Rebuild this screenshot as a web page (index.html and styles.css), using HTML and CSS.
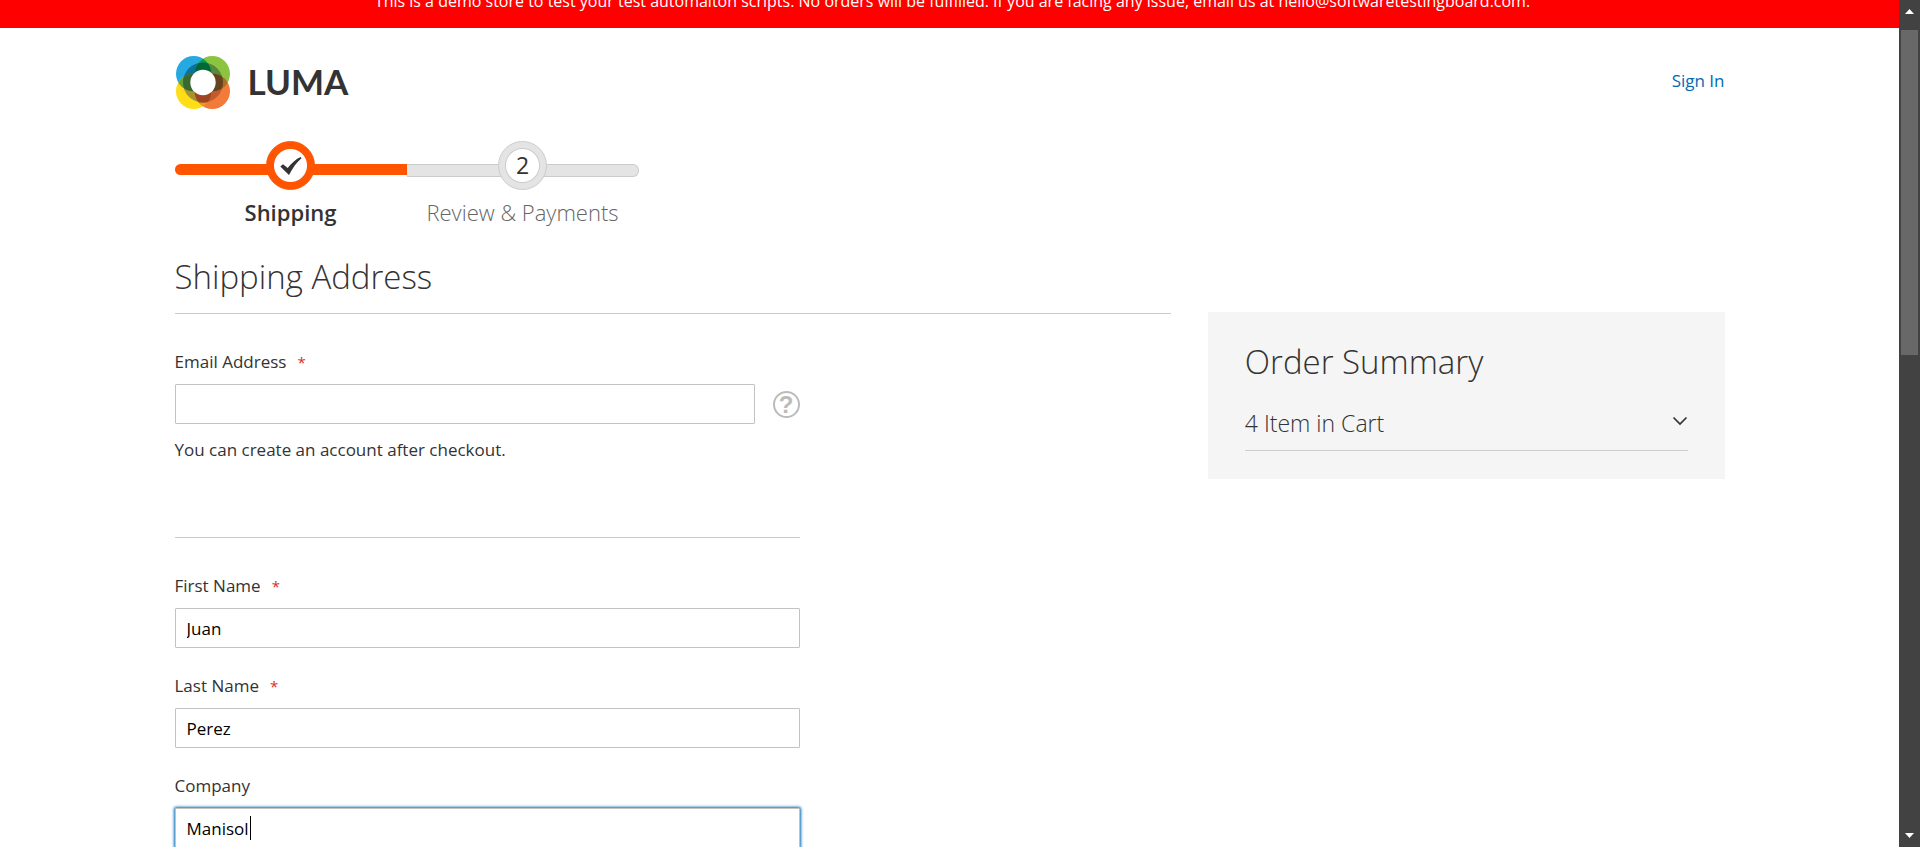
FILE: index.html
```html
<!DOCTYPE html>
<html lang="en">
<head>
<meta charset="utf-8">
<title>Checkout</title>
<link rel="stylesheet" href="styles.css">
</head>
<body>
<div class="page">
  <div class="notice"><p>This is a demo store to test your test automaiton scripts. No orders will be fulfilled. If you are facing any issue, email us at hello@softwaretestingboard.com.</p></div>
  <div class="container">
    <header class="header">
      <a class="logo" href="#" aria-label="Luma">
        <svg class="logo-mark" viewBox="48 168 162 159" aria-hidden="true">
          <defs>
            <clipPath id="clip-ring"><circle cx="129" cy="247.500" r="60"/></clipPath>
            <clipPath id="clip-blue"><circle cx="101" cy="221" r="53"/></clipPath>
            <clipPath id="clip-orange"><circle cx="157" cy="274" r="53"/></clipPath>
          </defs>
          <circle cx="101" cy="221" r="53" fill="#26a9e0"/>
          <circle cx="157" cy="221" r="53" fill="#8bc53f"/>
          <circle cx="101" cy="274" r="53" fill="#ffde17"/>
          <circle cx="157" cy="274" r="53" fill="#f37b3a"/>
          <g clip-path="url(#clip-blue)">
            <circle cx="157" cy="221" r="53" fill="#00a14b"/>
            <circle cx="101" cy="274" r="53" fill="#6aa03c"/>
          </g>
          <g clip-path="url(#clip-orange)">
            <circle cx="157" cy="221" r="53" fill="#a5702c"/>
            <circle cx="101" cy="274" r="53" fill="#f7941d"/>
          </g>
          <g clip-path="url(#clip-ring)">
            <circle cx="101" cy="221" r="53" fill="#0b739b"/>
            <circle cx="157" cy="221" r="53" fill="#57883c"/>
            <circle cx="101" cy="274" r="53" fill="#a69232"/>
            <circle cx="157" cy="274" r="53" fill="#bf5b2c"/>
            <g clip-path="url(#clip-blue)">
              <circle cx="157" cy="221" r="53" fill="#006837"/>
              <circle cx="101" cy="274" r="53" fill="#3a692f"/>
            </g>
            <g clip-path="url(#clip-orange)">
              <circle cx="157" cy="221" r="53" fill="#63441c"/>
              <circle cx="101" cy="274" r="53" fill="#9f4522"/>
            </g>
          </g>
          <circle cx="129" cy="247.500" r="38" fill="#fff"/>
        </svg>
        <span class="logo-text">LUMA</span>
      </a>
      <a class="sign-in" href="#">Sign In</a>
    </header>

    <ol class="steps">
      <li class="step step-active">
        <span class="step-mark">
          <svg viewBox="0 0 22 18" width="22" height="18" aria-hidden="true"><path d="M0.300 9.500 3 7.300 7.700 11 C11.500 6 16 2 20.700 0 L21.500 1.300 C17 5 12.500 11 9 18 Z" fill="#333"/></svg>
        </span>
        <span class="step-label">Shipping</span>
      </li>
      <li class="step">
        <span class="step-mark">2</span>
        <span class="step-label">Review &amp; Payments</span>
      </li>
    </ol>

    <div class="checkout">
      <main class="main">
        <h1 class="title">Shipping Address</h1>
        <form class="form">
          <div class="field account">
            <label for="email">Email Address<span class="required">*</span></label>
            <div class="email-row">
              <input class="text" id="email" type="email">
              <button class="help" type="button" aria-label="Help">?</button>
            </div>
            <p class="note">You can create an account after checkout.</p>
          </div>
          <div class="field">
            <label for="first">First Name<span class="required">*</span></label>
            <input class="text" id="first" type="text" value="Juan">
          </div>
          <div class="field">
            <label for="last">Last Name<span class="required">*</span></label>
            <input class="text" id="last" type="text" value="Perez">
          </div>
          <div class="field">
            <label for="company">Company</label>
            <div class="caret-box">
              <input class="text text-focus" id="company" type="text" value="Manisol">
              <span class="caret"></span>
            </div>
          </div>
        </form>
      </main>
      <aside class="summary">
        <h2 class="summary-title">Order Summary</h2>
        <button class="cart-toggle" type="button">4 Item in Cart
          <svg class="chevron" viewBox="0 0 16 10" width="16" height="10" aria-hidden="true"><path d="M1.500 1.500 8 8 14.500 1.500" fill="none" stroke="#333" stroke-width="1.700"/></svg>
        </button>
      </aside>
    </div>
  </div>
</div>
<div class="scrollbar" aria-hidden="true">
  <svg viewBox="0 0 21 30" width="21" height="30"><path d="M6 14 10.500 9 15 14Z" fill="#fff"/></svg>
  <div class="thumb"></div>
  <svg class="scroll-down" viewBox="0 0 21 21" width="21" height="21"><path d="M6 7 10.500 12 15 7Z" fill="#fff"/></svg>
</div>
</body>
</html>
```
FILE: styles.css
```css
* { box-sizing: border-box; }
body {
  margin: 0;
  height: 100vh;
  display: flex;
  overflow: hidden;
  background: #fff;
  color: #333;
  font: 400 17px/25px "Open Sans", "Noto Sans", sans-serif;
}
h1, h2, p, ol { margin: 0; padding: 0; font-weight: 400; }
.page { flex: 1; min-width: 0; overflow: hidden; }
.notice {
  display: flex;
  justify-content: center;
  align-items: flex-end;
  height: 28px;
  padding: 0 0 14px 6px;
  background: #f00;
  color: #fff;
  font-size: 16px;
  white-space: nowrap;
}
.container { max-width: 1600px; margin: 0 auto; padding: 28px 25px 0; }
.header { display: flex; justify-content: space-between; align-items: center; }
.logo { display: flex; align-items: center; gap: 18px; color: #333; text-decoration: none; }
.logo-mark { width: 54px; height: 53px; margin-left: 1px; }
.logo-text { padding-bottom: 3px; font: 700 35px/40px Lato, sans-serif; }
.sign-in { padding-bottom: 4px; color: #006bb4; text-decoration: none; }

.steps { display: flex; list-style: none; margin-top: 32px; }
.step {
  position: relative;
  width: 232px;
  display: flex;
  flex-direction: column;
  align-items: center;
  gap: 7px;
}
.step::before {
  content: "";
  position: absolute;
  top: 23px;
  left: 0;
  right: 0;
  height: 11px;
  background: #e4e4e4;
  border: 1px solid #ccc;
  border-left: 0;
  border-radius: 0 6px 6px 0;
}
.step-active::before { background: #ff5501; border: 0; border-radius: 6px 0 0 6px; }
.step-mark {
  position: relative;
  display: grid;
  place-items: center;
  width: 49px;
  height: 49px;
  border-radius: 50%;
  border: 1px solid #ccc;
  background: radial-gradient(circle, #fff 16px, #ccc 17px, #e4e4e4 18px);
  font-size: 23px;
  font-weight: 500;
}
.step-active .step-mark { border-color: #ff5501; background: radial-gradient(circle, #fff 16px, #ff5501 17px); }
.step-label { font-size: 22px; line-height: 30px; font-weight: 300; color: #666; }
.step-active .step-label { font-weight: 600; color: #333; }

.checkout { display: grid; grid-template-columns: 1fr 33.333%; gap: 37px; align-items: start; margin-top: 28px; }
.title { font-size: 33px; line-height: 44px; font-weight: 300; padding-bottom: 14px; border-bottom: 1px solid #ccc; }
.form { display: flex; flex-direction: column; gap: 25px; max-width: 625px; padding-top: 35px; }
.field { display: flex; flex-direction: column; gap: 10px; }
.account { padding-bottom: 75px; margin-bottom: 10px; border-bottom: 1px solid #ccc; }
.note { margin-top: 3px; }
.required { margin-left: 11px; color: #e02b27; font-size: 15px; line-height: 1; }
.text {
  width: 100%;
  height: 40px;
  padding: 0 11px;
  border: 1px solid #c2c2c2;
  border-radius: 1px;
  background: #fff;
  color: #000;
  font: inherit;
  outline: 0;
}
.text-focus { box-shadow: 0 0 3px 1px #006bb4; }
.email-row { display: flex; align-items: center; gap: 18px; }
.email-row .text { flex: 1; min-width: 0; }
.help {
  width: 27px;
  height: 27px;
  padding: 0;
  border: 2px solid #bbb;
  border-radius: 50%;
  background: none;
  color: #bbb;
  font: 700 24px/23px "Liberation Sans", sans-serif;
}
.caret-box { position: relative; }
.caret { position: absolute; top: 8px; left: 75px; width: 1px; height: 24px; background: #000; }

.summary { margin-top: 57px; padding: 27px 37px 28px; background: #f5f5f5; }
.summary-title { font-size: 33px; line-height: 45px; font-weight: 300; }
.cart-toggle {
  display: flex;
  justify-content: space-between;
  align-items: center;
  width: 100%;
  margin-top: 23px;
  padding: 0 0 11px;
  border: 0;
  border-bottom: 1px solid #ccc;
  background: none;
  color: #333;
  font: 300 23px/32px "Open Sans", "Noto Sans", sans-serif;
}
.chevron { margin-bottom: 4px; }

.scrollbar {
  display: flex;
  flex-direction: column;
  align-items: center;
  width: 21px;
  background: #424242;
}
.thumb { width: 17px; height: 325px; background: #686868; }
.scroll-down { margin-top: auto; }
```
